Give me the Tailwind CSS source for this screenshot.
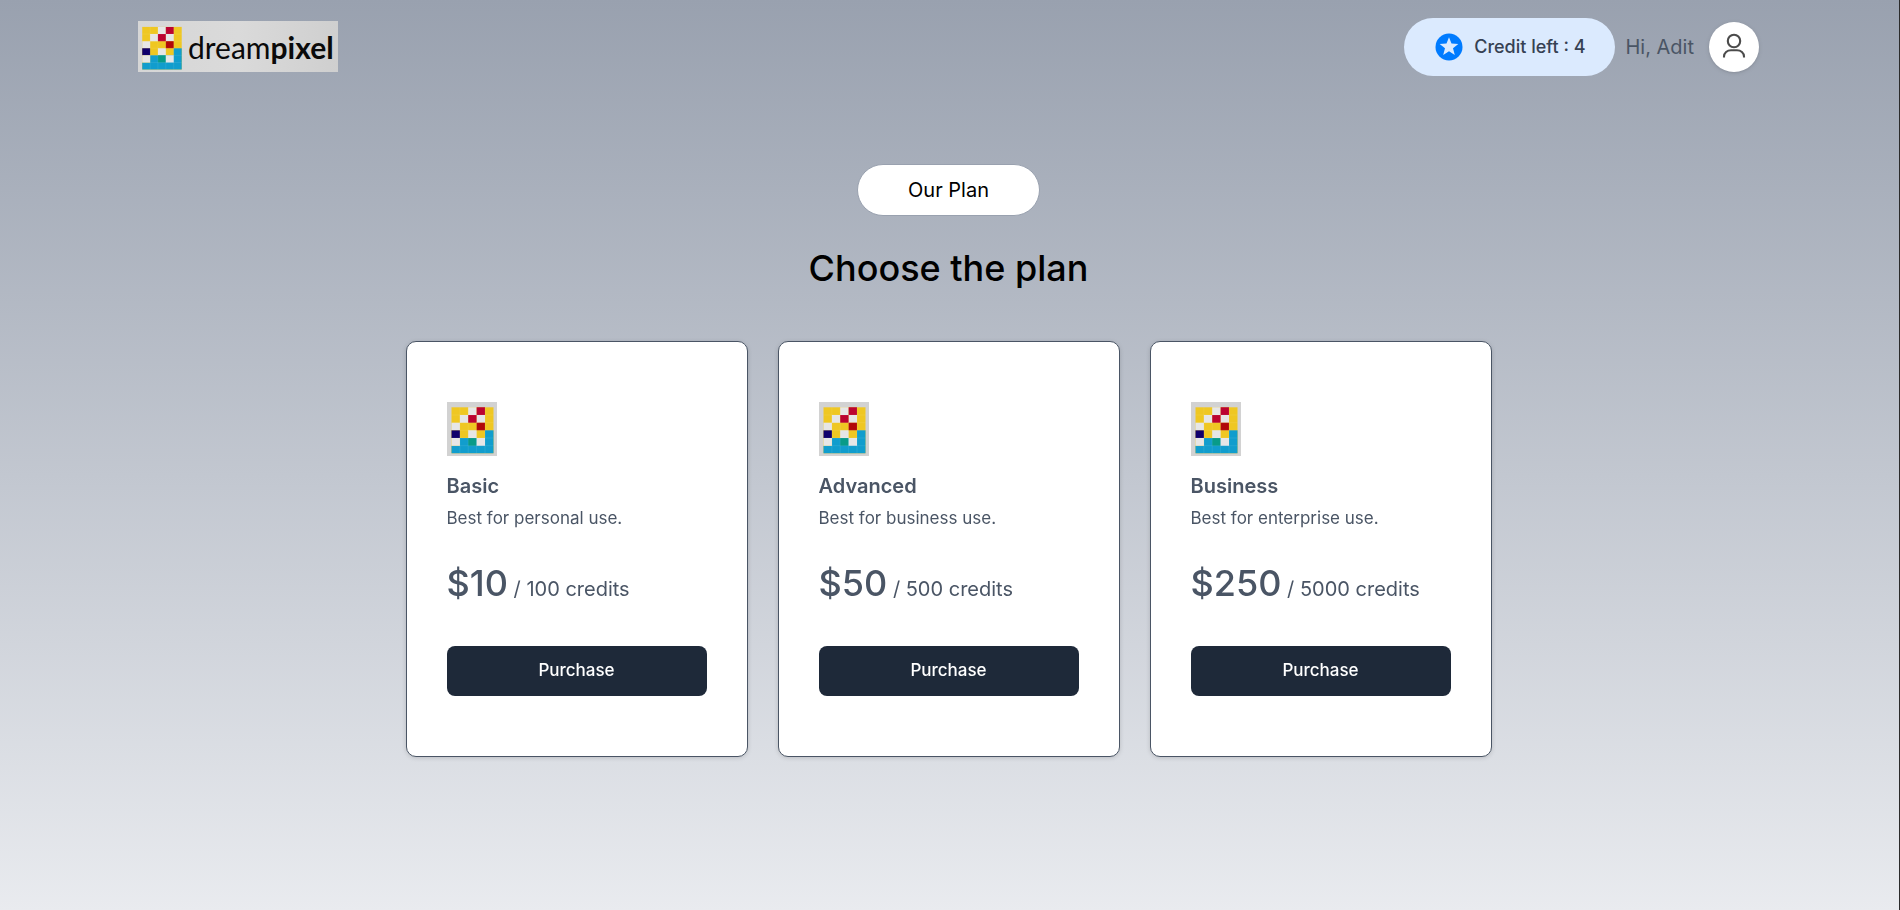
<!DOCTYPE html>
<html lang="en">
<head>
<meta charset="utf-8">
<meta name="viewport" content="width=device-width, initial-scale=1">
<title>dreampixel – Plans</title>
<script src="https://cdn.jsdelivr.net/npm/@tailwindcss/browser@4"></script>
</head>
<body class="min-h-screen border-r border-[#2b2b2b] bg-linear-to-b from-[#99a1af] to-[#e9ebef] font-['Inter',sans-serif] text-xl text-black">

<svg class="hidden" aria-hidden="true">
  <symbol id="mosaic" viewBox="0 0 50 54">
    <rect x="4.5" y="5.3" width="42" height="46" fill="#efc722"/>
    <g fill="#e6e6e6">
      <path d="M21.2 5.3h8.4V13h-8.4zM12.9 13h8.3v7.7h-8.3zM29.6 13h8.4v7.7h-8.4zM4.5 20.7h8.4v7.6H4.5zM21.2 28.3h8.4V36h-8.4z"/>
    </g>
    <path fill="#bb0330" d="M29.6 5.3H38V13h-8.4zM21.2 13h8.4v7.7h-8.4z"/>
    <path fill="#b10808" d="M29.6 20.7H38v7.6h-8.4z"/>
    <path fill="#10006c" d="M4.5 28.3h8.4V36H4.5z"/>
    <path fill="#119dcd" d="M38 28.3h8.5v23h-42v-7.6h8.4V36H38z"/>
    <path fill="#089b88" d="M21.2 36h8.4v7.7h-8.4z"/>
    <path fill="#e6e6e6" d="M4.5 36h8.4v7.7H4.5zM29.6 36H38v7.700h-8.4z"/>
    <path stroke="#fff" stroke-opacity=".15" stroke-width=".6" fill="none" d="M12.9 5.3v46M21.2 5.3v46M29.6 5.3v46M38 5.3v46M4.5 13h42M4.5 20.7h42M4.5 28.3h42M4.5 36h42M4.5 43.7h42"/>
  </symbol>
</svg>

<header class="flex items-start justify-between pt-[18px] pr-[140px] pl-[138px]">
  <a href="#" class="mt-[3px] flex h-[51px] w-[200px] items-center gap-[3px] bg-linear-to-r from-[#d6d6d6] via-[#dadada] to-[#cfcfcf]" aria-label="dreampixel">
    <svg class="h-[50px] w-[47px] shrink-0" viewBox="0 0 50 54" preserveAspectRatio="none"><use href="#mosaic" width="50" height="54"/></svg>
    <span class="font-['Lato',sans-serif] text-[30px] leading-9 text-[#0a0a0a]">dream<b class="font-bold">pixel</b></span>
  </a>
  <div class="flex items-center">
    <button class="flex h-[58px] items-center gap-[10px] rounded-full bg-blue-100 px-[30px] text-lg font-medium text-gray-700">
      <svg class="size-[30px]" viewBox="0 0 30 30"><circle cx="15" cy="15" r="13.5" fill="#007bff"/><path fill="#dbeafe" d="M15 5.2l2.5 6.4 6.8.4-5.3 4.3 1.8 6.6-5.8-3.7-5.8 3.7 1.8-6.6-5.3-4.3 6.8-.4z"/></svg>
      Credit left : 4
    </button>
    <p class="pr-[15px] pl-[10px] text-gray-600">Hi, Adit</p>
    <button class="flex size-[50px] items-center justify-center rounded-full bg-white drop-shadow" aria-label="Account">
      <svg class="size-[30px]" viewBox="0 0 30 30" fill="none" stroke="#4b4b4b" stroke-width="2.1"><circle cx="15" cy="9" r="6.2"/><path d="M5 25.5v-1c0-3.600 3.200-6.200 7-6.200h6c3.800 0 7 2.600 7 6.200v1"/></svg>
    </button>
  </div>
</header>

<main class="flex flex-col items-center pt-[88px] pr-0.5 pb-10 text-center">
  <button class="h-[52px] rounded-full border border-gray-400 bg-white px-[50px]">Our Plan</button>
  <h1 class="mt-[30px] text-4xl leading-[45px] font-medium">Choose the plan</h1>
  <div class="mt-[50px] flex flex-wrap justify-center gap-[30px] text-left text-gray-600">
    <section class="rounded-[10px] border border-gray-600 bg-white px-10 py-[60px] drop-shadow-sm">
      <svg class="h-[54px] w-[50px] bg-[#d2d2d2]"><use href="#mosaic"/></svg>
      <h2 class="mt-[15px] mb-[5px] leading-[30px] font-semibold">Basic</h2>
      <p class="text-[17px] leading-[25px]">Best for personal use.</p>
      <p class="mt-[30px] leading-[30px]"><span class="text-4xl leading-[45px] font-medium">$10</span> / 100 credits</p>
      <button class="mt-10 h-[50px] w-[260px] rounded-lg bg-gray-800 text-[17px] font-medium text-white">Purchase</button>
    </section>
    <section class="rounded-[10px] border border-gray-600 bg-white px-10 py-[60px] drop-shadow-sm">
      <svg class="h-[54px] w-[50px] bg-[#d2d2d2]"><use href="#mosaic"/></svg>
      <h2 class="mt-[15px] mb-[5px] leading-[30px] font-semibold">Advanced</h2>
      <p class="text-[17px] leading-[25px]">Best for business use.</p>
      <p class="mt-[30px] leading-[30px]"><span class="text-4xl leading-[45px] font-medium">$50</span> / 500 credits</p>
      <button class="mt-10 h-[50px] w-[260px] rounded-lg bg-gray-800 text-[17px] font-medium text-white">Purchase</button>
    </section>
    <section class="rounded-[10px] border border-gray-600 bg-white px-10 py-[60px] drop-shadow-sm">
      <svg class="h-[54px] w-[50px] bg-[#d2d2d2]"><use href="#mosaic"/></svg>
      <h2 class="mt-[15px] mb-[5px] leading-[30px] font-semibold">Business</h2>
      <p class="text-[17px] leading-[25px]">Best for enterprise use.</p>
      <p class="mt-[30px] leading-[30px]"><span class="text-4xl leading-[45px] font-medium">$250</span> / 5000 credits</p>
      <button class="mt-10 h-[50px] w-[260px] rounded-lg bg-gray-800 text-[17px] font-medium text-white">Purchase</button>
    </section>
  </div>
</main>
</body>
</html>
